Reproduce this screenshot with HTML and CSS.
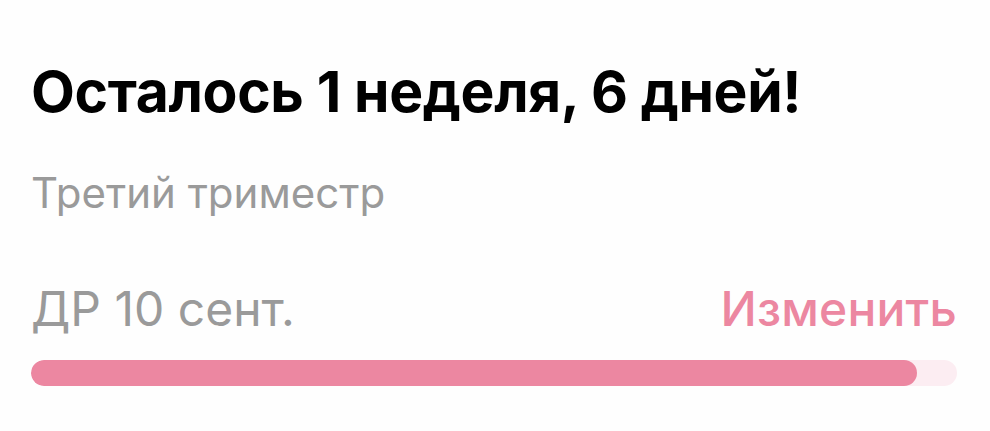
FILE: index.html
```html
<!DOCTYPE html>
<html lang="ru">
<head>
<meta charset="utf-8">
<link rel="stylesheet" href="styles.css">
</head>
<body>
<div class="card">
  <h1 class="title">Осталось 1 неделя, 6 дней!</h1>
  <div class="sub">Третий триместр</div>
  <div class="row">
    <span class="due">ДР 10 сент.</span>
    <span class="edit">Изменить</span>
  </div>
  <div class="track"><div class="fill" style="width:95.7%"></div></div>
</div>
</body>
</html>
```
FILE: styles.css
```css
html, body {
  margin: 0;
  padding: 0;
  background: #fefefe;
}
body {
  width: 990px;
  height: 431px;
  overflow: hidden;
  font-family: Inter, "Liberation Sans", sans-serif;
}
.card {
  padding: 57px 33px 0 31px;
}
.title {
  margin: 0;
  font-size: 57px;
  font-weight: 700;
  line-height: 69px;
  color: #000;
  letter-spacing: -0.35px;
}
.sub {
  margin-top: 41px;
  font-size: 42px;
  line-height: 51px;
  color: #9a9a9a;
}
.row {
  margin-top: 62px;
  display: flex;
  justify-content: space-between;
  align-items: baseline;
  font-size: 48px;
  line-height: 58px;
}
.due { color: #9a9a9a; }
.edit { color: #ec87a1; font-weight: 500; letter-spacing: 0.2px; }
.track {
  margin-top: 22px;
  height: 26px;
  border-radius: 13px;
  background: #fcedf2;
  overflow: hidden;
}
.fill {
  height: 100%;
  border-radius: 13px;
  background: #ec87a1;
}
```
